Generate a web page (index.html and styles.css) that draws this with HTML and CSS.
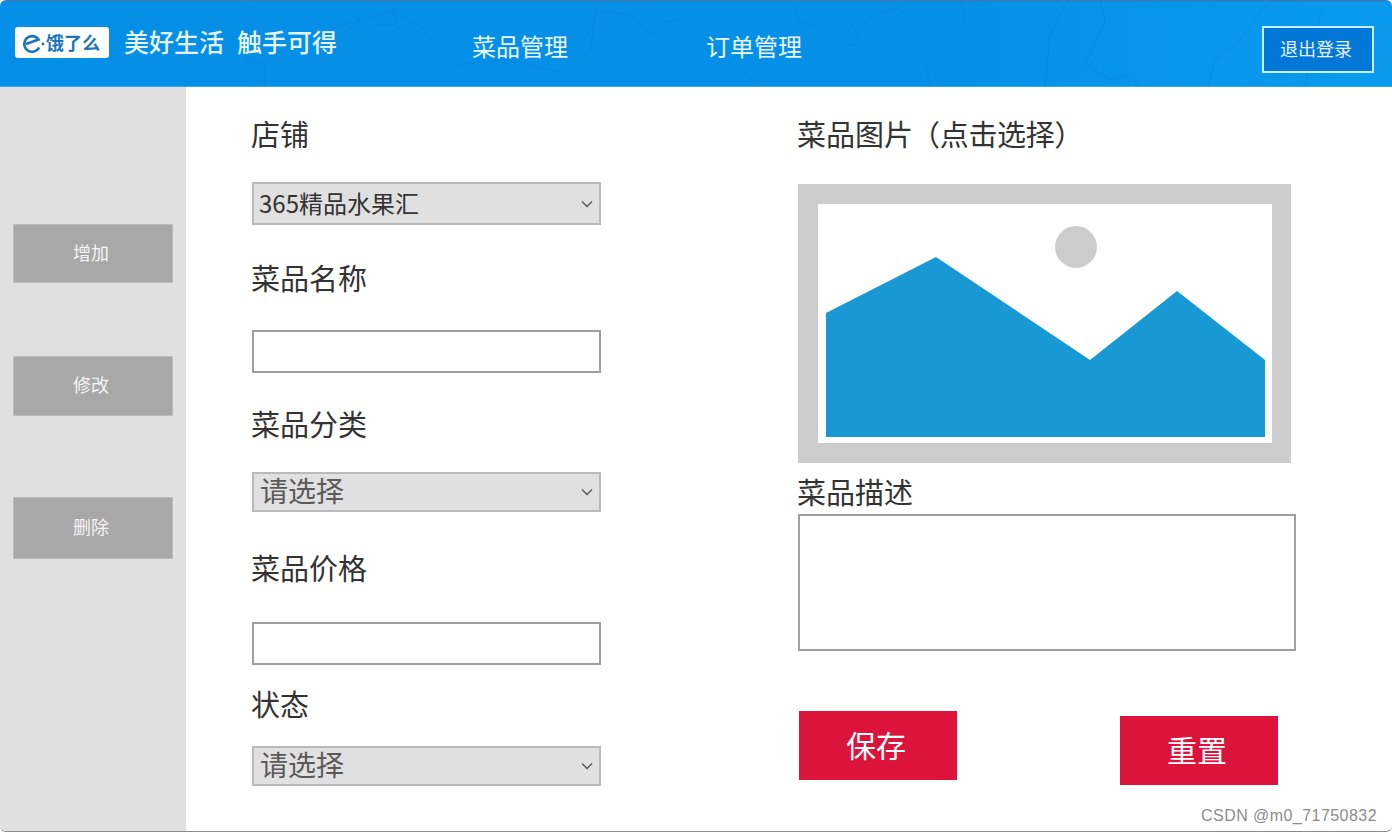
FILE: index.html
```html
<!DOCTYPE html>
<html lang="zh-CN">
<head>
<meta charset="utf-8">
<title>菜品管理</title>
<link rel="stylesheet" href="styles.css">
</head>
<body>
<div class="app">
  <header class="topbar">
    <svg class="map-lines" viewBox="0 0 1392 87" width="1392" height="87" aria-hidden="true">
      <path d="M356 12 L362 30 L378 25 L397 24 L392 10 L425 30 L424 33 L455 65 L480 62 L510 60 L530 65 L560 72 L590 50 L596 10 L630 15 L652 35 L665 22 L685 18 L702 35 L725 60 L760 85"/>
      <path d="M245 58 L265 65 L264 87"/>
      <path d="M334 28 L395 10"/>
      <path d="M795 5 L798 22 L825 28 L842 45 L860 45 L855 30 L880 12 L900 8"/>
      <path d="M960 0 L965 20 L950 40 L925 60 L930 87"/>
      <path d="M1065 5 L1050 35 L1045 87"/>
      <path d="M1100 0 L1105 22 L1085 65 L1112 80 L1130 75 L1140 87"/>
      <path d="M1270 0 L1240 40 L1215 60 L1208 87"/>
      <path d="M1320 15 L1305 87"/>
    </svg>
    <div class="logo">
      <svg class="logo-e" viewBox="0 0 24 20" width="24" height="20" aria-hidden="true">
        <path d="M4 11 L16.5 6.5 A7.8 7.8 0 1 0 17 14.5"/>
        <circle cx="21" cy="11" r="1.4"/>
      </svg>
      <span class="logo-name">饿了么</span>
    </div>
    <div class="slogan"><span>美好生活</span><span>触手可得</span></div>
    <nav class="nav">
      <a class="nav-link">菜品管理</a>
      <a class="nav-link">订单管理</a>
    </nav>
    <button class="logout">退出登录</button>
  </header>
  <div class="content">
    <aside class="sidebar">
      <button class="side-btn side-add">增加</button>
      <button class="side-btn side-edit">修改</button>
      <button class="side-btn side-del">删除</button>
    </aside>
    <main class="form">
      <section class="col-left">
        <label class="label">店铺</label>
        <div class="select-wrap mt28 tall">
          <select class="select shop"><option>365精品水果汇</option></select>
          <svg class="chevron" viewBox="0 0 12 8" width="12" height="8" aria-hidden="true"><path d="M1 1.5 L6 6.5 L11 1.5"/></svg>
        </div>
        <label class="label mt33">菜品名称</label>
        <input class="input mt32" type="text">
        <label class="label mt31">菜品分类</label>
        <div class="select-wrap mt28">
          <select class="select"><option>请选择</option></select>
          <svg class="chevron" viewBox="0 0 12 8" width="12" height="8" aria-hidden="true"><path d="M1 1.5 L6 6.5 L11 1.5"/></svg>
        </div>
        <label class="label mt36">菜品价格</label>
        <input class="input mt34" type="text">
        <label class="label mt19">状态</label>
        <div class="select-wrap mt22">
          <select class="select"><option>请选择</option></select>
          <svg class="chevron" viewBox="0 0 12 8" width="12" height="8" aria-hidden="true"><path d="M1 1.5 L6 6.5 L11 1.5"/></svg>
        </div>
      </section>
      <section class="col-right">
        <label class="label">菜品图片<span class="label-note">（点击选择）</span></label>
        <svg class="picture" viewBox="0 0 493 279" width="493" height="279" role="img" aria-label="菜品图片">
          <rect class="pic-frame" width="493" height="279"/>
          <rect class="pic-inner" x="20" y="20" width="454" height="239"/>
          <circle class="pic-frame" cx="278" cy="63" r="21"/>
          <polygon class="pic-hill" points="28,129 138,73 292,176 379,107 467,176 467,253 28,253"/>
        </svg>
        <label class="label mt9">菜品描述</label>
        <textarea class="textarea"></textarea>
        <div class="actions">
          <button class="action">保存</button>
          <button class="action reset">重置</button>
        </div>
      </section>
    </main>
  </div>
  <span class="watermark">CSDN @m0_71750832</span>
</div>
</body>
</html>
```
FILE: styles.css
```css
* { box-sizing: border-box; }
html, body { margin: 0; padding: 0; background: #fff; }
body {
  width: 1392px;
  height: 833px;
  overflow: hidden;
  font-family: "Noto Sans CJK SC", "Noto Sans", sans-serif;
}
.app {
  position: relative;
  width: 1392px;
  height: 832px;
  display: flex;
  flex-direction: column;
  border-bottom: 1px solid #8a8a8a;
  border-radius: 6px;
  overflow: hidden;
}
.topbar {
  position: relative;
  height: 87px;
  flex: none;
  display: flex;
  align-items: flex-start;
  background: linear-gradient(90deg, #058fe6 0%, #058fe6 65%, #0a9bee 100%);
  border-top: 2px solid #2a80c2;
  border-bottom: 1px solid #3aa6ec;
}
.map-lines {
  position: absolute;
  left: 0;
  top: -2px;
  fill: none;
  stroke: #0a80d2;
  stroke-width: 1;
  opacity: .45;
}
.logo {
  position: relative;
  margin: 25px 0 0 15px;
  width: 94px;
  height: 31px;
  background: #fff;
  border-radius: 3px;
  display: flex;
  align-items: center;
  padding-left: 7px;
  color: #1d75b6;
}
.logo-e { flex: none; fill: none; stroke: #1d75b6; stroke-width: 2.6; }
.logo-e circle { fill: #1d75b6; stroke: none; }
.logo-name {
  font-size: 18px;
  line-height: 31px;
  font-weight: 700;
}
.slogan {
  position: relative;
  margin: 22px 0 0 15px;
  display: flex;
  gap: 13px;
  color: #e4f4fd;
  font-size: 25px;
  line-height: 35px;
  font-weight: 500;
}
.nav {
  position: relative;
  margin: 26px 0 0 135px;
  display: flex;
  gap: 138px;
}
.nav-link {
  color: #e8f6fe;
  font-size: 24px;
  line-height: 36px;
}
.logout {
  position: relative;
  margin: 24px 18px 0 auto;
  width: 112px;
  height: 47px;
  padding: 0 4px 4px 0;
  background: #0277d8;
  border: 2px solid #c8effc;
  color: #e4f4fd;
  font: inherit;
  font-size: 18px;
}
.content { flex: 1; display: flex; min-height: 0; }
.sidebar {
  width: 186px;
  flex: none;
  background: #e0e0e0;
  padding: 137px 0 0 13px;
  display: flex;
  flex-direction: column;
  align-items: flex-start;
}
.side-btn {
  width: 160px;
  padding: 0 4px 4px 0;
  background: #a8a8a8;
  border: 1px solid #bcbcbc;
  color: #f4f4f4;
  font: inherit;
  font-size: 18px;
}
.side-add { height: 59px; }
.side-edit { height: 60px; margin-top: 73px; }
.side-del { height: 62px; margin-top: 81px; }
.form { flex: 1; display: flex; }
.col-left {
  width: 546px;
  flex: none;
  padding: 27px 0 0 66px;
  display: flex;
  flex-direction: column;
  align-items: flex-start;
}
.col-right {
  flex: 1;
  padding: 27px 0 0 66px;
  display: flex;
  flex-direction: column;
  align-items: flex-start;
}
.label {
  display: block;
  height: 40px;
  margin-left: -1px;
  font-size: 29px;
  line-height: 38px;
  color: #333;
  white-space: nowrap;
}
.label-note { margin-left: -2px; letter-spacing: -.3px; }
.mt9 { margin-top: 9px; }
.mt19 { margin-top: 19px; }
.mt22 { margin-top: 22px; }
.mt28 { margin-top: 28px; }
.mt31 { margin-top: 31px; }
.mt32 { margin-top: 32px; }
.mt33 { margin-top: 33px; }
.mt34 { margin-top: 34px; }
.mt36 { margin-top: 36px; }
.select-wrap {
  position: relative;
  width: 349px;
  height: 40px;
}
.select-wrap.tall { height: 43px; }
.select {
  appearance: none;
  display: block;
  width: 100%;
  height: 100%;
  padding: 0 30px 4px 6px;
  background: #e0e0e0;
  border: 2px solid #bababa;
  border-radius: 0;
  color: #5a5a5a;
  font: inherit;
  font-size: 28px;
  line-height: 30px;
}
.select.shop { font-size: 24px; color: #333; padding: 0 30px 1px 5px; }
.chevron {
  position: absolute;
  right: 8px;
  top: 50%;
  margin-top: -4px;
  fill: none;
  stroke: #555;
  stroke-width: 1.3;
  pointer-events: none;
}
.input {
  display: block;
  width: 349px;
  height: 43px;
  background: #fff;
  border: 2px solid #9f9f9f;
  border-radius: 0;
  padding: 0 6px;
}
.picture { display: block; margin-top: 30px; }
.pic-frame { fill: #cccccc; }
.pic-inner { fill: #fff; }
.pic-hill { fill: #1899d4; }
.textarea {
  display: block;
  margin-top: 2px;
  width: 498px;
  height: 137px;
  border: 2px solid #9f9f9f;
  border-radius: 0;
  resize: none;
  background: #fff;
}
.actions {
  margin: 60px 0 0 1px;
  display: flex;
  align-items: flex-start;
  gap: 163px;
}
.action {
  width: 158px;
  height: 69px;
  padding: 0 4px 4px 0;
  border: 0;
  background: #dc143c;
  color: #fff;
  font: inherit;
  font-size: 30px;
}
.action.reset { margin-top: 5px; height: 69px; }
.watermark {
  position: absolute;
  right: 15px;
  bottom: 6px;
  font-family: "Liberation Sans", sans-serif;
  font-size: 16px;
  line-height: 18px;
  letter-spacing: .45px;
  color: #8c8c8c;
}
```
